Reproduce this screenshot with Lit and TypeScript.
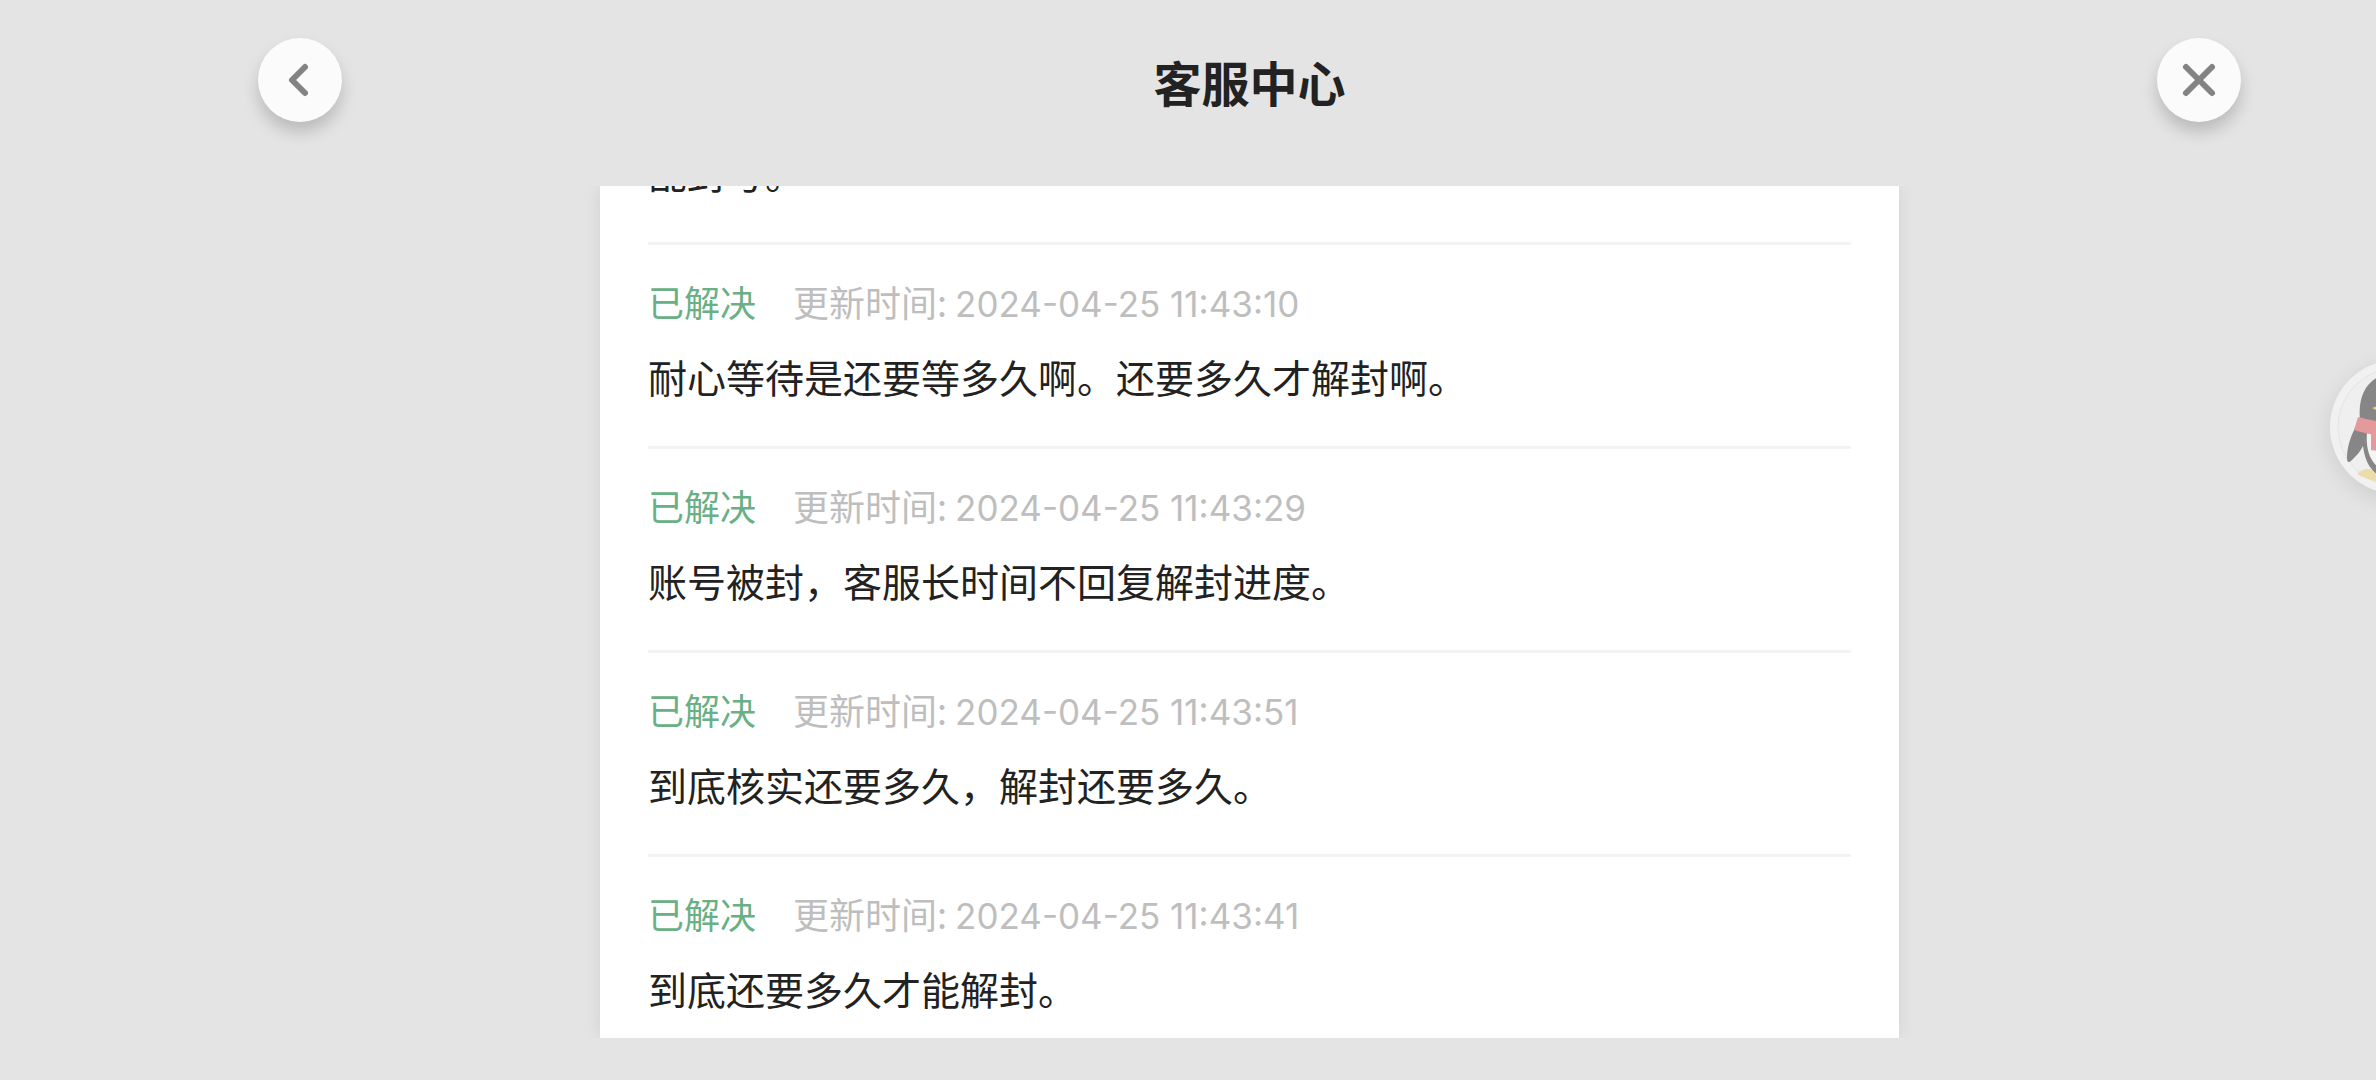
import { LitElement, html, css, svg, nothing } from "lit";
import { customElement, state } from "lit/decorators.js";

interface Ticket {
  status?: string;
  updated?: string;
  text: string;
}

@customElement("app-root")
export class AppRoot extends LitElement {
  @state() private tickets: Ticket[] = [
    { text: "乱封号。" },
    { status: "已解决", updated: "2024-04-25 11:43:10", text: "耐心等待是还要等多久啊。还要多久才解封啊。" },
    { status: "已解决", updated: "2024-04-25 11:43:29", text: "账号被封，客服长时间不回复解封进度。" },
    { status: "已解决", updated: "2024-04-25 11:43:51", text: "到底核实还要多久，解封还要多久。" },
    { status: "已解决", updated: "2024-04-25 11:43:41", text: "到底还要多久才能解封。" },
  ];

  static styles = css`
    :host {
      display: block;
      font-family: "Noto Sans CJK SC", sans-serif;
      color: #222;
    }
    * {
      box-sizing: border-box;
    }
    .page {
      position: relative;
      height: 100vh;
      display: flex;
      flex-direction: column;
      gap: 62px;
      padding: 38px 135px 42px 258px;
      background: #e4e4e4;
      overflow: hidden;
    }
    .header {
      display: flex;
      align-items: flex-start;
      justify-content: space-between;
    }
    .title {
      margin: 0;
      font-size: 48px;
      line-height: 86px;
      font-weight: 700;
    }
    .round {
      display: flex;
      width: 84px;
      height: 84px;
      padding: 0;
      border: 0;
      border-radius: 50%;
      background: #fbfbfb;
      box-shadow: 0 10px 16px rgba(0, 0, 0, 0.18);
      cursor: pointer;
    }
    .icon {
      display: block;
      width: 84px;
      height: 84px;
      fill: none;
      stroke: #838383;
      stroke-width: 6;
      stroke-linecap: round;
      stroke-linejoin: round;
    }
    .card {
      flex: 1;
      min-height: 0;
      width: 65.5%;
      margin: 0 auto;
      padding: 0 48px;
      background: #fff;
      box-shadow: 0 0 16px rgba(0, 0, 0, 0.08);
      clip-path: inset(0 -24px);
      overflow: hidden;
      display: flex;
      flex-direction: column;
      justify-content: flex-end;
    }
    .list {
      margin: 0;
      padding: 0;
      list-style: none;
    }
    .item {
      padding: 32px 0 40px;
      border-top: 3px solid #f3f3f3;
    }
    .item:last-child {
      padding-bottom: 20px;
    }
    .meta {
      display: flex;
      align-items: baseline;
      gap: 37px;
      height: 48px;
      font-size: 36px;
      line-height: 48px;
      color: #bebebe;
    }
    .status {
      color: #69b086;
    }
    .time {
      display: flex;
      align-items: baseline;
      gap: 8px;
    }
    .date {
      font-family: Inter, sans-serif;
      font-size: 35px;
    }
    .text {
      margin: 21px 0 0;
      font-size: 39px;
      line-height: 60px;
    }
    .helper {
      position: absolute;
      top: 360px;
      right: -88px;
      width: 134px;
      height: 134px;
      padding: 0;
      border: 0;
      border-radius: 50%;
      background: #f1f1f1;
      box-shadow: 0 6px 22px rgba(0, 0, 0, 0.1);
      cursor: pointer;
    }
    .penguin {
      display: block;
      width: 134px;
      height: 134px;
    }
  `;

  private penguin() {
    return svg`
      <circle cx="67" cy="67" r="59" fill="#efefef" stroke="#e4e4e4" stroke-width="1" />
      <path d="M27 114 C33 108 42 107 52 114 L62 120 L58 123 C46 122 35 119 27 114 Z" fill="#eddcab" />
      <path d="M30 60 C23 70 17 84 17 98 C17 103 19 103 22 100 C27 95 30 92 33 86 C35 102 41 112 53 118 L81 118 C93 112 99 102 101 86 C104 92 107 95 112 100 C115 103 117 103 117 98 C117 84 111 70 104 60 C104 28 92 13 67 13 C42 13 27 30 30 60 Z" fill="#868686" />
      <path d="M37 72 C35 96 44 112 67 114 C90 112 99 96 97 72 Z" fill="#f4f4f4" />
      <path d="M42 48 Q67 38 92 48 Q67 62 42 48Z" fill="#ecc98e" />
      <path d="M28 57 Q67 68 106 57 L110 70 Q67 84 24 70 Z" fill="#e49a9c" />
      <path d="M41 71 L58 75 L57 92 L41 90 Z" fill="#e49a9c" />
    `;
  }

  private meta(t: Ticket) {
    if (!t.status) return nothing;
    return html`
      <div class="meta">
        <span class="status">${t.status}</span>
        <span class="time"><span>更新时间:</span><time class="date">${t.updated}</time></span>
      </div>
    `;
  }

  render() {
    return html`
      <div class="page">
        <header class="header">
          <button class="round" type="button" aria-label="返回">
            <svg class="icon" viewBox="0 0 84 84" aria-hidden="true"><path d="M47 29 L34 42 L47 55" /></svg>
          </button>
          <h1 class="title">客服中心</h1>
          <button class="round" type="button" aria-label="关闭">
            <svg class="icon" viewBox="0 0 84 84" aria-hidden="true"><path d="M29 29 L55 55 M55 29 L29 55" /></svg>
          </button>
        </header>
        <main class="card">
          <ul class="list">
            ${this.tickets.map((t) => html`<li class="item">${this.meta(t)}<p class="text">${t.text}</p></li>`)}
          </ul>
        </main>
        <button class="helper" type="button" aria-label="助手">
          <svg class="penguin" viewBox="0 0 134 134" aria-hidden="true">${this.penguin()}</svg>
        </button>
      </div>
    `;
  }
}
